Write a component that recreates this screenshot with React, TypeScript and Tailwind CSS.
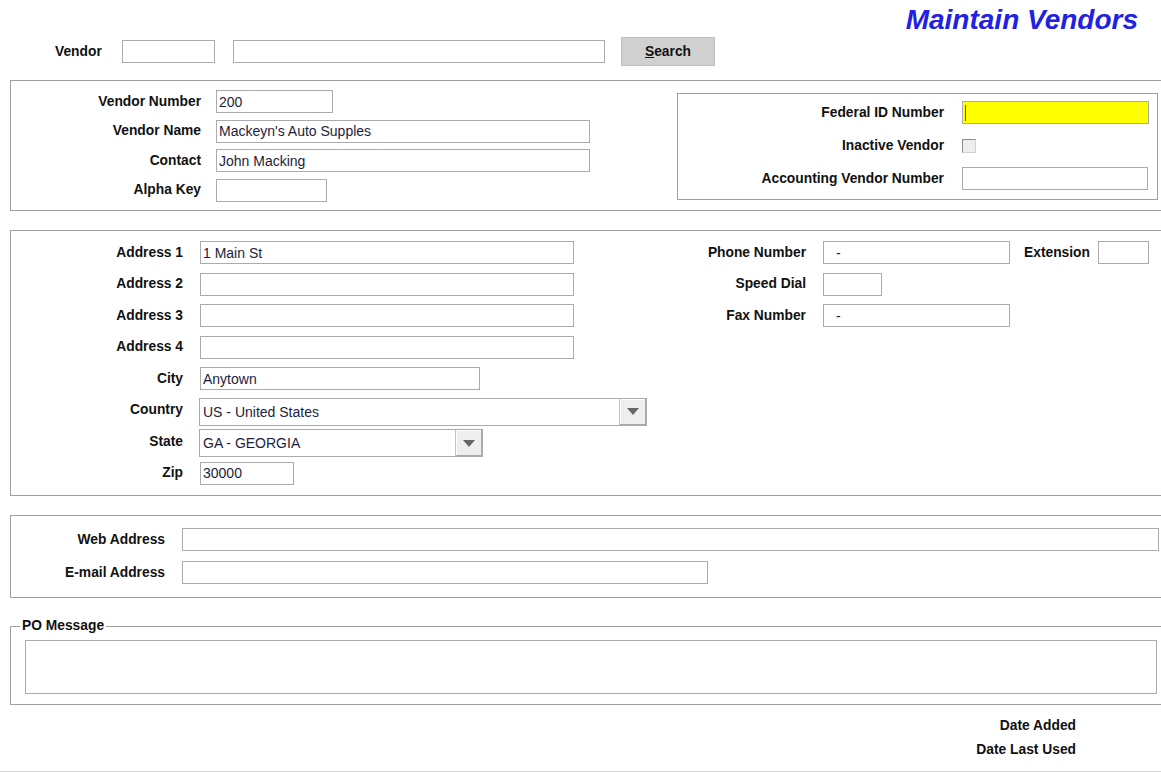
import React from "react";

const LBL = "text-[13.8px] font-bold text-[#111] leading-none whitespace-nowrap";
const FLD =
  "h-[23px] border border-[#ababab] bg-white flex items-center px-[2px] text-[14px] text-[#1d1d3d] leading-none whitespace-nowrap overflow-hidden";

function Field({ cls, value }: { cls: string; value?: React.ReactNode }) {
  return <div className={`${FLD} ${cls}`}>{value}</div>;
}

function Select({ cls, value }: { cls: string; value: string }) {
  return (
    <div className={`flex h-[28px] border border-[#ababab] bg-white ${cls}`}>
      <div className="flex-1 flex items-center px-[3px] text-[14px] text-[#1d1d3d] leading-none whitespace-nowrap">
        {value}
      </div>
      <div className="w-[27px] h-full bg-[#eeeeee] border-l border-[#c4c4c4] flex items-center justify-center shadow-[inset_-1px_-1px_0_#a8a8a8,inset_1px_1px_0_#ffffff]">
        <svg width="12" height="7" viewBox="0 0 12 7">
          <polygon points="0,0 12,0 6,7" fill="#666666" />
        </svg>
      </div>
    </div>
  );
}

export default function App() {
  return (
    <div className="w-[1161px] h-[773px] overflow-hidden bg-white [font-family:'Liberation_Sans',Arial,sans-serif] text-black">
      {/* Title */}
      <div className="flex justify-end h-[37px] pr-[23px]">
        <span className="pt-[6px] text-[28px] font-bold italic text-[#2121e3] leading-none whitespace-nowrap">
          Maintain Vendors
        </span>
      </div>

      {/* Search row */}
      <div className="flex items-center h-[29px] pl-[55px]">
        <div className={`w-[67px] ${LBL}`}>Vendor</div>
        <Field cls="w-[93px]" />
        <Field cls="ml-[18px] w-[372px]" />
        <div className="ml-[16px] w-[94px] h-[29px] bg-[#d0d0d0] border border-[#bfbfbf] flex items-center justify-center text-[13.8px] font-bold text-[#111] leading-none">
          <span className="underline">S</span>earch
        </div>
      </div>

      {/* Section 1 */}
      <div className="mt-[14px] ml-[10px] w-[1155px] h-[131px] border border-[#a0a0a0] flex">
        <div className="flex flex-col pt-[6px]">
          <div className="flex items-center h-[29.5px]">
            <div className={`w-[190px] text-right ${LBL}`}>Vendor Number</div>
            <Field cls="ml-[15px] w-[117px]" value="200" />
          </div>
          <div className="flex items-center h-[29.5px]">
            <div className={`w-[190px] text-right ${LBL}`}>Vendor Name</div>
            <Field cls="ml-[15px] w-[374px]" value="Mackeyn's Auto Supples" />
          </div>
          <div className="flex items-center h-[29.5px]">
            <div className={`w-[190px] text-right ${LBL}`}>Contact</div>
            <Field cls="ml-[15px] w-[374px]" value="John Macking" />
          </div>
          <div className="flex items-center h-[29.5px]">
            <div className={`w-[190px] text-right ${LBL}`}>Alpha Key</div>
            <Field cls="ml-[15px] w-[111px]" />
          </div>
        </div>

        <div className="ml-auto mt-[12px] mr-[6px] w-[481px] h-[107px] border border-[#a0a0a0] pt-[2px] flex flex-col">
          <div className="flex items-center h-[33px]">
            <div className={`w-[266px] text-right ${LBL}`}>Federal ID Number</div>
            <div className="ml-[18px] w-[187px] h-[23px] border border-[#ababab] bg-[#ffff00] flex items-center pl-[2px]">
              <span className="w-[1px] h-[16px] bg-[#ff0000]" />
            </div>
          </div>
          <div className="flex items-center h-[33px]">
            <div className={`w-[266px] text-right ${LBL}`}>Inactive Vendor</div>
            <div className="ml-[18px] w-[14px] h-[14px] bg-[#eeeeee] border border-t-[#8c8c8c] border-l-[#8c8c8c] border-r-[#d2d2d2] border-b-[#d2d2d2]" />
          </div>
          <div className="flex items-center h-[33px]">
            <div className={`w-[266px] text-right ${LBL}`}>Accounting Vendor Number</div>
            <Field cls="ml-[18px] w-[186px]" />
          </div>
        </div>
      </div>

      {/* Section 2 */}
      <div className="mt-[19px] ml-[10px] w-[1155px] h-[266px] border border-[#a0a0a0] flex pt-[6px]">
        <div className="w-[650px] flex flex-col">
          <div className="flex items-center h-[31.5px]">
            <div className={`w-[172px] text-right ${LBL}`}>Address 1</div>
            <Field cls="ml-[17px] w-[374px]" value="1 Main St" />
          </div>
          <div className="flex items-center h-[31.5px]">
            <div className={`w-[172px] text-right ${LBL}`}>Address 2</div>
            <Field cls="ml-[17px] w-[374px]" />
          </div>
          <div className="flex items-center h-[31.5px]">
            <div className={`w-[172px] text-right ${LBL}`}>Address 3</div>
            <Field cls="ml-[17px] w-[374px]" />
          </div>
          <div className="flex items-center h-[31.5px]">
            <div className={`w-[172px] text-right ${LBL}`}>Address 4</div>
            <Field cls="ml-[17px] w-[374px]" />
          </div>
          <div className="flex items-center h-[31.5px]">
            <div className={`w-[172px] text-right ${LBL}`}>City</div>
            <Field cls="ml-[17px] w-[280px]" value="Anytown" />
          </div>
          <div className="flex items-center h-[31.5px]">
            <div className={`w-[172px] text-right ${LBL}`}>Country</div>
            <Select cls="ml-[16px] mt-[3px] w-[448px]" value="US - United States" />
          </div>
          <div className="flex items-center h-[31.5px]">
            <div className={`w-[172px] text-right ${LBL}`}>State</div>
            <Select cls="ml-[16px] mt-[3px] w-[284px]" value="GA - GEORGIA" />
          </div>
          <div className="flex items-center h-[31.5px]">
            <div className={`w-[172px] text-right ${LBL}`}>Zip</div>
            <Field cls="ml-[17px] w-[94px]" value="30000" />
          </div>
        </div>

        <div className="flex flex-col">
          <div className="flex items-center h-[31.5px]">
            <div className={`w-[145px] text-right ${LBL}`}>Phone Number</div>
            <Field cls="ml-[17px] w-[187px] pl-[12px]" value="-" />
            <div className={`ml-[14px] ${LBL}`}>Extension</div>
            <Field cls="ml-[8px] w-[51px]" />
          </div>
          <div className="flex items-center h-[31.5px]">
            <div className={`w-[145px] text-right ${LBL}`}>Speed Dial</div>
            <Field cls="ml-[17px] w-[59px]" />
          </div>
          <div className="flex items-center h-[31.5px]">
            <div className={`w-[145px] text-right ${LBL}`}>Fax Number</div>
            <Field cls="ml-[17px] w-[187px] pl-[12px]" value="-" />
          </div>
        </div>
      </div>

      {/* Section 3 */}
      <div className="mt-[19px] ml-[10px] w-[1155px] h-[83px] border border-[#a0a0a0] flex flex-col pt-[7px]">
        <div className="flex items-center h-[33px]">
          <div className={`w-[154px] text-right ${LBL}`}>Web Address</div>
          <Field cls="ml-[17px] w-[977px]" />
        </div>
        <div className="flex items-center h-[33px]">
          <div className={`w-[154px] text-right ${LBL}`}>E-mail Address</div>
          <Field cls="ml-[17px] w-[526px]" />
        </div>
      </div>

      {/* PO Message */}
      <fieldset className="mt-[20px] ml-[10px] w-[1155px] border border-[#a0a0a0] pb-[10px]">
        <legend className={`ml-[9px] px-[2px] h-[16px] flex items-center ${LBL}`}>PO Message</legend>
        <div className="ml-[14px] mt-[6px] w-[1132px] h-[54px] border border-[#ababab] bg-white" />
      </fieldset>

      {/* Dates */}
      <div className="mt-[9px] w-[1076px] flex flex-col items-end">
        <div className={`h-[24px] flex items-center ${LBL}`}>Date Added</div>
        <div className={`h-[24px] flex items-center ${LBL}`}>Date Last Used</div>
      </div>
      <div className="mt-[9px] w-full border-t border-[#d6d6d6]" />
    </div>
  );
}
